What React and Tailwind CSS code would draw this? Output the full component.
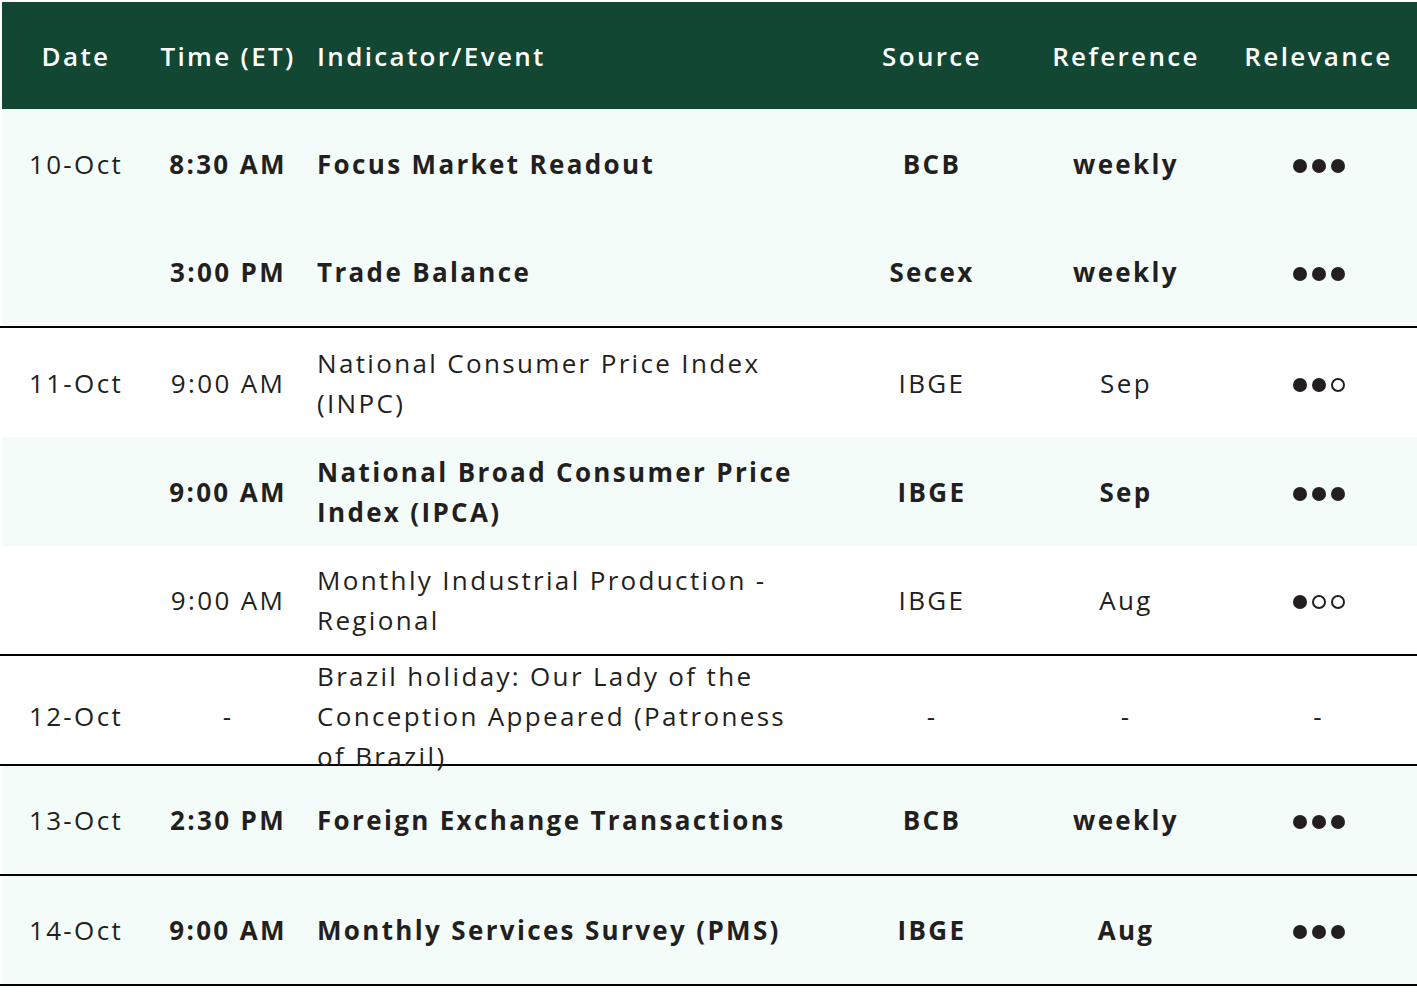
import React from 'react';

const rows = [
  { date: '10-Oct', time: '8:30 AM', event: 'Focus Market Readout', source: 'BCB', ref: 'weekly', rel: 3, bold: true, bg: 'bg-[#f3fcf9]' },
  { date: '', time: '3:00 PM', event: 'Trade Balance', source: 'Secex', ref: 'weekly', rel: 3, bold: true, bg: 'bg-[#f3fcf9]', line: true },
  { date: '11-Oct', time: '9:00 AM', event: 'National Consumer Price Index (INPC)', source: 'IBGE', ref: 'Sep', rel: 2, bg: 'bg-white' },
  { date: '', time: '9:00 AM', event: 'National Broad Consumer Price Index (IPCA)', source: 'IBGE', ref: 'Sep', rel: 3, bold: true, bg: 'bg-[#f3fcf9]' },
  { date: '', time: '9:00 AM', event: 'Monthly Industrial Production - Regional', source: 'IBGE', ref: 'Aug', rel: 1, bg: 'bg-white', line: true },
  { date: '12-Oct', time: '-', event: 'Brazil holiday: Our Lady of the Conception Appeared (Patroness of Brazil)', source: '-', ref: '-', rel: 0, bg: 'bg-white', line: true },
  { date: '13-Oct', time: '2:30 PM', event: 'Foreign Exchange Transactions', source: 'BCB', ref: 'weekly', rel: 3, bold: true, bg: 'bg-[#f3fcf9]', line: true },
  { date: '14-Oct', time: '9:00 AM', event: 'Monthly Services Survey (PMS)', source: 'IBGE', ref: 'Aug', rel: 3, bold: true, bg: 'bg-[#f3fcf9]', line: true },
];

const cols = 'grid grid-cols-[148px_156px_529px_194px_194px_191px]';

const Dots = ({ n }) => {
  if (n === 0) return <span>-</span>;
  return (
    <span className="flex items-center gap-[5px] mt-[4px]">
      {[0, 1, 2].map((i) => (
        <span
          key={i}
          className={
            i < n
              ? 'w-[14px] h-[14px] rounded-full bg-[#231f20]'
              : 'w-[14px] h-[14px] rounded-full border-2 border-[#231f20]'
          }
        />
      ))}
    </span>
  );
};

const App = () => {
  return (
    <div className="min-h-screen bg-white text-[#231f20] text-[26px] leading-[40px] tracking-[0.09em] font-['Open_Sans',sans-serif]">
      <div className={`${cols} ml-[2px] mt-[2px] h-[107px] bg-[#124734] text-white font-semibold items-center text-center`}>
        <div>Date</div>
        <div>Time (ET)</div>
        <div className="text-left pl-[11px]">Indicator/Event</div>
        <div>Source</div>
        <div>Reference</div>
        <div>Relevance</div>
      </div>
      {rows.map((r, i) => (
        <div key={i} className={r.line ? 'border-b-2 border-black' : ''}>
          <div className={`${cols} ml-[2px] ${r.bg} ${r.line ? 'h-[108px]' : 'h-[109px]'} items-center text-center`}>
            <div>{r.date}</div>
            <div className={r.bold ? 'font-bold' : ''}>{r.time}</div>
            <div className={`text-left pl-[11px] pr-[28px] ${r.bold ? 'font-bold' : ''}`}>{r.event}</div>
            <div className={r.bold ? 'font-bold' : ''}>{r.source}</div>
            <div className={r.bold ? 'font-bold' : ''}>{r.ref}</div>
            <div className="flex justify-center">
              <Dots n={r.rel} />
            </div>
          </div>
        </div>
      ))}
    </div>
  );
};

export default App;
